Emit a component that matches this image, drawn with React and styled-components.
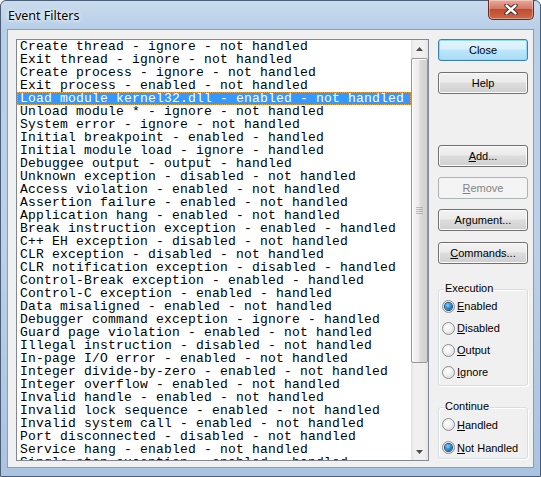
import React from "react";
import styled, { createGlobalStyle } from "styled-components";

const GlobalStyle = createGlobalStyle`
  html, body {
    margin: 0;
    padding: 0;
    background: #ffffff;
  }
  body {
    width: 541px;
    height: 477px;
    overflow: hidden;
  }
`;

const events = [
  "Create thread - ignore - not handled",
  "Exit thread - ignore - not handled",
  "Create process - ignore - not handled",
  "Exit process - enabled - not handled",
  "Load module kernel32.dll - enabled - not handled",
  "Unload module * - ignore - not handled",
  "System error - ignore - not handled",
  "Initial breakpoint - enabled - handled",
  "Initial module load - ignore - handled",
  "Debuggee output - output - handled",
  "Unknown exception - disabled - not handled",
  "Access violation - enabled - not handled",
  "Assertion failure - enabled - not handled",
  "Application hang - enabled - not handled",
  "Break instruction exception - enabled - handled",
  "C++ EH exception - disabled - not handled",
  "CLR exception - disabled - not handled",
  "CLR notification exception - disabled - handled",
  "Control-Break exception - enabled - handled",
  "Control-C exception - enabled - handled",
  "Data misaligned - enabled - not handled",
  "Debugger command exception - ignore - handled",
  "Guard page violation - enabled - not handled",
  "Illegal instruction - disabled - not handled",
  "In-page I/O error - enabled - not handled",
  "Integer divide-by-zero - enabled - not handled",
  "Integer overflow - enabled - not handled",
  "Invalid handle - enabled - not handled",
  "Invalid lock sequence - enabled - not handled",
  "Invalid system call - enabled - not handled",
  "Port disconnected - disabled - not handled",
  "Service hang - enabled - not handled",
  "Single step exception - enabled - handled",
];

const SELECTED = 4;

const Window = styled.div`
  box-sizing: border-box;
  width: 541px;
  height: 477px;
  display: flex;
  flex-direction: column;
  padding: 0 6px 8px 6px;
  border: 1px solid #4b5e78;
  border-radius: 6px 6px 0 0;
  background: linear-gradient(
    180deg,
    #c9dbee 0%,
    #b8cfe8 6%,
    #bcd1e8 50%,
    #aac3e0 100%
  );
`;

const TitleBar = styled.div`
  height: 28px;
  display: flex;
  align-items: flex-start;
  justify-content: space-between;
`;

const Title = styled.span`
  margin: 6px 0 0 1px;
  font: 12.5px "Noto Sans", "Open Sans", sans-serif;
  color: #000;
  text-shadow: 0 0 6px #ffffff, 0 0 3px #ffffff;
`;

const CaptionClose = styled.div`
  width: 46px;
  height: 20px;
  margin-top: -1px;
  display: flex;
  align-items: center;
  justify-content: center;
  box-sizing: border-box;
  border: 1px solid #6b2a22;
  border-top: none;
  border-radius: 0 0 5px 5px;
  background: linear-gradient(180deg, #e9a99b 0%, #d47866 45%, #c24a32 50%, #cf6a45 100%);
  box-shadow: inset 0 0 0 1px rgba(255, 255, 255, 0.35);
`;

const Client = styled.div`
  flex: 1;
  display: flex;
  padding: 9px 5px 5px 8px;
  border: 1px solid #8c9cb1;
  background: #f0f0f0;
`;

const ListBox = styled.div`
  box-sizing: border-box;
  width: 413px;
  height: 422px;
  display: flex;
  border: 1px solid #828790;
  background: #ffffff;
`;

const Items = styled.div`
  flex: 1;
  overflow: hidden;
`;

const Item = styled.div`
  box-sizing: border-box;
  height: 13px;
  padding: 1px 0 0 3px;
  white-space: pre;
  font: 13px/12px "Liberation Mono", "Courier New", monospace;
  letter-spacing: 0.2px;
  color: ${(p) => (p.$selected ? "#ffffff" : "#000000")};
  background: ${(p) => (p.$selected ? "#3399ff" : "transparent")};
  outline: ${(p) => (p.$selected ? "1px dotted #f0a040" : "none")};
  outline-offset: -1px;
`;

const ScrollBar = styled.div`
  width: 17px;
  display: flex;
  flex-direction: column;
  background: linear-gradient(90deg, #e3e3e3 0%, #f0f0f0 20%, #f0f0f0 80%, #e3e3e3 100%);
`;

const ScrollArrow = styled.div`
  height: 17px;
  display: flex;
  align-items: center;
  justify-content: center;
`;

const Track = styled.div`
  flex: 1;
`;

const Thumb = styled.div`
  position: relative;
  box-sizing: border-box;
  height: 305px;
  margin: 1px 0 0 0;
  border: 1px solid #979797;
  border-radius: 2px;
  background: linear-gradient(90deg, #f6f6f6 0%, #ebebeb 45%, #dadada 55%, #d0d0d0 100%);
  box-shadow: inset 1px 1px 0 #ffffff;

  &::after {
    content: "";
    position: absolute;
    left: 4px;
    right: 4px;
    top: 148px;
    height: 7px;
    background: repeating-linear-gradient(180deg, #8a8a8a 0 1px, transparent 1px 2px);
    opacity: 0.5;
  }
`;

const Side = styled.div`
  width: 90px;
  margin-left: 9px;
  display: flex;
  flex-direction: column;
`;

const Button = styled.div`
  box-sizing: border-box;
  width: 90px;
  height: 22px;
  margin-top: ${(p) => p.$gap || 0}px;
  display: flex;
  align-items: center;
  justify-content: center;
  border: 1px solid #707070;
  border-radius: 3px;
  background: linear-gradient(180deg, #f2f2f2 0%, #ebebeb 45%, #dddddd 50%, #cfcfcf 100%);
  box-shadow: inset 0 0 0 1px #fbfbfb;
  font: 11px "Liberation Sans", Arial, sans-serif;
  color: #000000;

  u {
    text-underline-offset: 1px;
  }

  ${(p) =>
    p.$default &&
    `
    border-color: #3c7fb1;
    background: linear-gradient(180deg, #e6f6fd 0%, #d6f0fc 45%, #bde6fb 50%, #a8ddf6 100%);
    box-shadow: inset 0 0 0 1px #8fdaf7;
  `}

  ${(p) =>
    p.$disabled &&
    `
    border-color: #adb2b5;
    background: #f4f4f4;
    box-shadow: none;
    color: #838383;
  `}
`;

const GroupBox = styled.div`
  position: relative;
  box-sizing: border-box;
  height: ${(p) => p.$height}px;
  margin-top: ${(p) => p.$gap}px;
  padding: 5px 0 0 1px;
  border: 1px solid #d5dfe5;
  border-radius: 3px;
  box-shadow: inset 1px 1px 0 #ffffff, 1px 1px 0 #ffffff;
`;

const Legend = styled.span`
  position: absolute;
  top: -8px;
  left: 5px;
  padding: 0 1px;
  background: #f0f0f0;
  font: 11px "Liberation Sans", Arial, sans-serif;
  color: #000000;
`;

const RadioRow = styled.div`
  height: ${(p) => p.$row}px;
  display: flex;
  align-items: center;
  gap: 2px;
  font: 11px "Liberation Sans", Arial, sans-serif;
  color: #000000;
`;

const RadioDot = styled.span`
  box-sizing: border-box;
  width: 13px;
  height: 13px;
  margin-left: 2px;
  border-radius: 50%;
  border: 1px solid #8e8f8f;
  background: radial-gradient(circle at 40% 35%, #ffffff 0%, #f0f0f0 45%, #d2d2d2 100%);
  display: flex;
  align-items: center;
  justify-content: center;

  &::after {
    content: "";
    display: ${(p) => (p.$checked ? "block" : "none")};
    width: 7px;
    height: 7px;
    border-radius: 50%;
    background: radial-gradient(circle at 40% 35%, #8ad4ff 0%, #2a8fd6 45%, #0e3b6a 100%);
    box-shadow: 0 0 0 1px #1b4a74;
  }
`;

const Radio = ({ checked, row, children }) => (
  <RadioRow $row={row}>
    <RadioDot $checked={checked} />
    <span>{children}</span>
  </RadioRow>
);

const Arrow = ({ down }) => (
  <svg width="7" height="4" viewBox="0 0 7 4">
    <path d={down ? "M0 0H7L3.5 4Z" : "M0 4H7L3.5 0Z"} fill="#4d4d4d" />
  </svg>
);

export default function App() {
  return (
    <>
      <GlobalStyle />
      <Window>
        <TitleBar>
          <Title>Event Filters</Title>
          <CaptionClose>
            <svg width="14" height="11" viewBox="0 0 14 11">
              <path d="M2.5 1.5L11.5 9.5M11.5 1.5L2.5 9.5" stroke="#3b1b16" strokeWidth="4.2" strokeLinecap="round" />
              <path d="M2.5 1.5L11.5 9.5M11.5 1.5L2.5 9.5" stroke="#ffffff" strokeWidth="2.4" strokeLinecap="round" />
            </svg>
          </CaptionClose>
        </TitleBar>
        <Client>
          <ListBox>
            <Items>
              {events.map((e, i) => (
                <Item key={i} $selected={i === SELECTED}>
                  {e}
                </Item>
              ))}
            </Items>
            <ScrollBar>
              <ScrollArrow>
                <Arrow />
              </ScrollArrow>
              <Track>
                <Thumb />
              </Track>
              <ScrollArrow>
                <Arrow down />
              </ScrollArrow>
            </ScrollBar>
          </ListBox>
          <Side>
            <Button $default>Close</Button>
            <Button $gap={11}>Help</Button>
            <Button $gap={51}>
              <span>
                <u>A</u>dd...
              </span>
            </Button>
            <Button $gap={10} $disabled>
              <span>
                <u>R</u>emove
              </span>
            </Button>
            <Button $gap={10}>
              <span>
                Ar<u>g</u>ument...
              </span>
            </Button>
            <Button $gap={11}>
              <span>
                <u>C</u>ommands...
              </span>
            </Button>
            <GroupBox $gap={25} $height={97}>
              <Legend>Execution</Legend>
              <Radio row={22} checked>
                <u>E</u>nabled
              </Radio>
              <Radio row={22}>
                <u>D</u>isabled
              </Radio>
              <Radio row={22}>
                <u>O</u>utput
              </Radio>
              <Radio row={22}>
                <u>I</u>gnore
              </Radio>
            </GroupBox>
            <GroupBox $gap={21} $height={52}>
              <Legend>Continue</Legend>
              <Radio row={23}>
                <u>H</u>andled
              </Radio>
              <Radio row={23} checked>
                <u>N</u>ot Handled
              </Radio>
            </GroupBox>
          </Side>
        </Client>
      </Window>
    </>
  );
}
